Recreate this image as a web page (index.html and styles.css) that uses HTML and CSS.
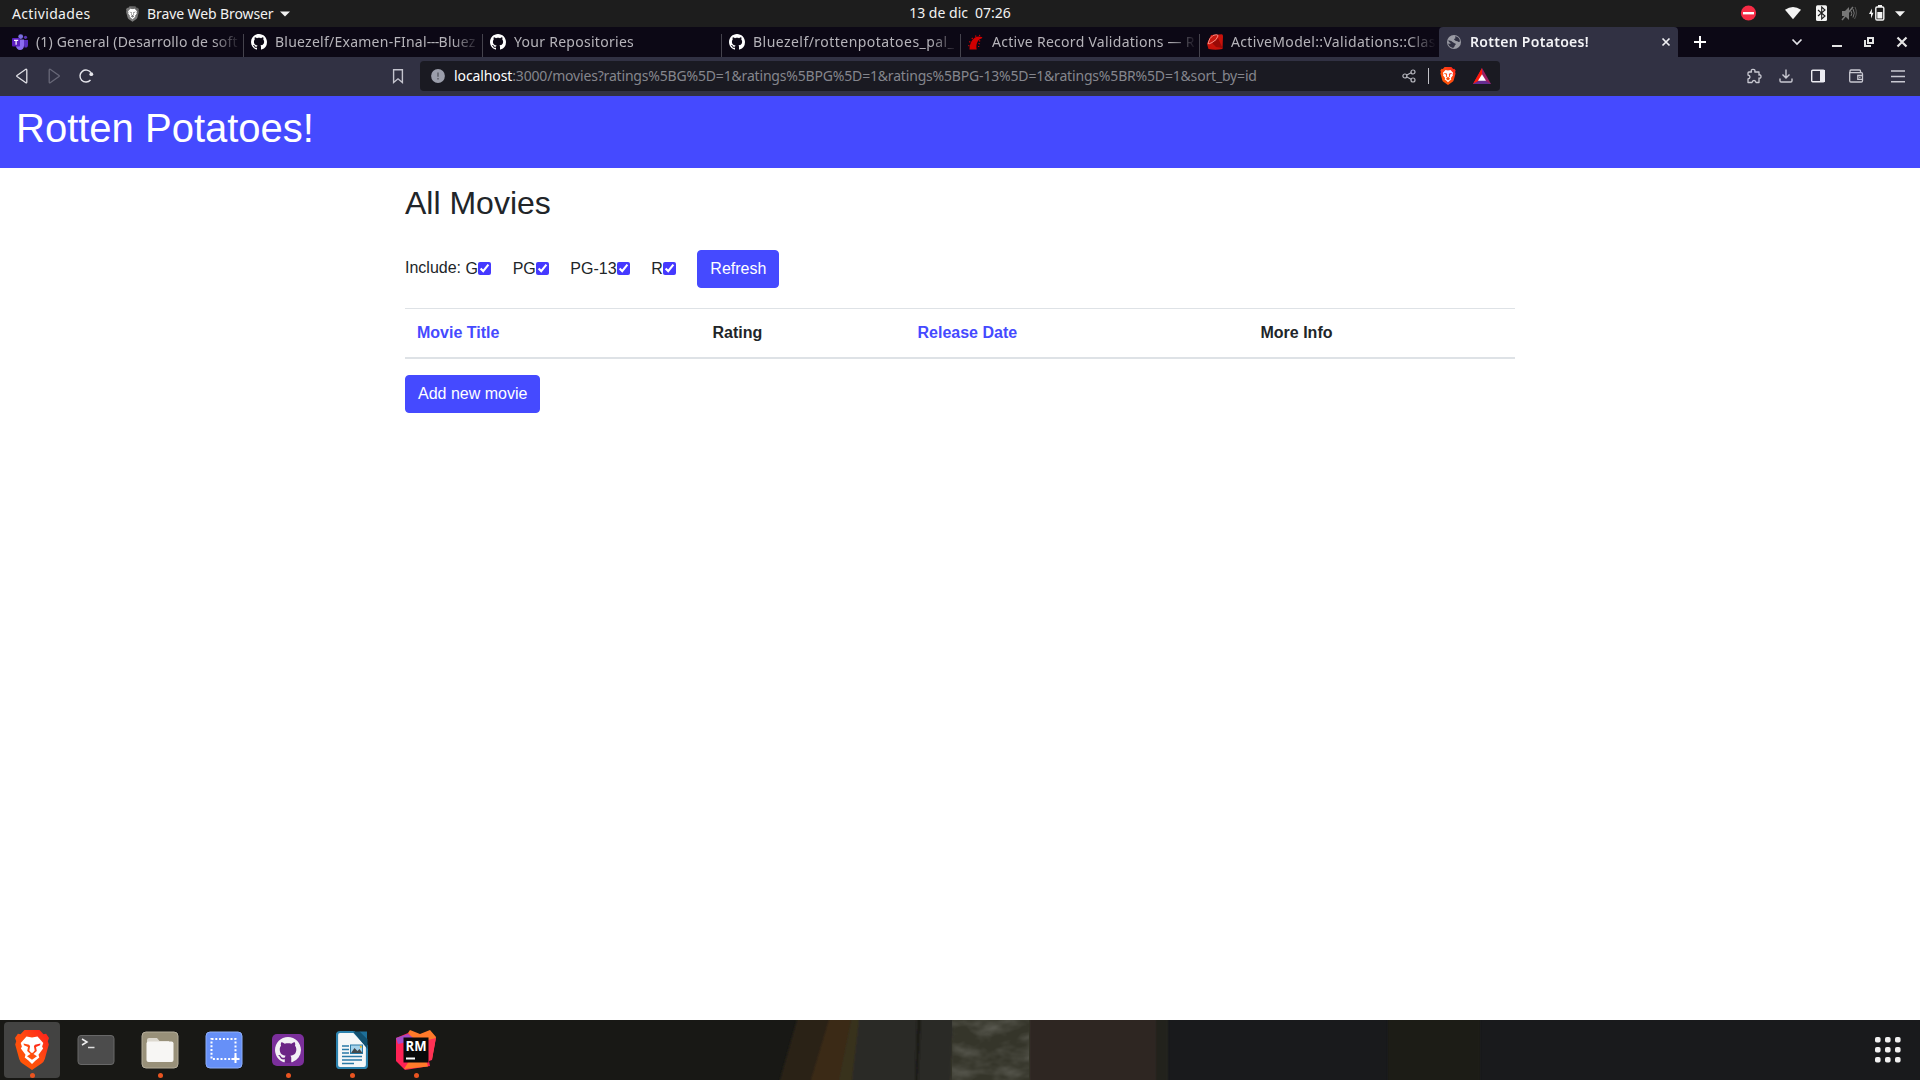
FILE: index.html
```html
<!DOCTYPE html>
<html lang="es">
<head>
<meta charset="utf-8">
<title>Rotten Potatoes!</title>
<link rel="stylesheet" href="styles.css">
</head>
<body>
<svg class="defs" width="0" height="0">
  <defs>
    <symbol id="github" viewBox="0 0 16 16"><path d="M8 0C3.58 0 0 3.58 0 8c0 3.54 2.29 6.53 5.47 7.59.4.07.55-.17.55-.38 0-.19-.01-.82-.01-1.49-2.01.37-2.53-.49-2.69-.94-.09-.23-.48-.94-.82-1.13-.28-.15-.68-.52-.01-.53.63-.01 1.08.58 1.23.82.72 1.21 1.87.87 2.33.66.07-.52.28-.87.51-1.07-1.78-.2-3.64-.89-3.64-3.95 0-.87.31-1.59.82-2.15-.08-.2-.36-1.02.08-2.12 0 0 .67-.21 2.2.82.64-.18 1.32-.27 2-.27s1.36.09 2 .27c1.53-1.04 2.2-.82 2.2-.82.44 1.1.16 1.92.08 2.12.51.56.82 1.27.82 2.15 0 3.07-1.87 3.75-3.65 3.95.29.25.54.73.54 1.48 0 1.07-.01 1.93-.01 2.2 0 .21.15.46.55.38A8.01 8.01 0 0016 8c0-4.42-3.58-8-8-8z"/></symbol>
    <symbol id="lion" viewBox="0 0 34 40">
      <path class="shield" d="M9.500 0h15l4 4.300 2.600-.6 2.900 4.300-1.200 3.300 1 3.200-4 14.500q-.8 2.800-3.300 4.500L17 40l-9.500-6.500Q5 31.800 4.200 29L.2 14.500l1-3.200L0 8l2.900-4.300 2.600.6z"/>
      <path class="face" d="M17 7.500l5.500-1 5.800 6.500-1.200 3.500 1 2-4.600 6.200.8 2.800-4 3.200L17 34l-3.300-3.300-4-3.200.8-2.800-4.600-6.200 1-2L5.700 13l5.800-6.500z"/>
      <path class="shield" d="M8.500 13.500l5.600 1.200 1 1.500-.8 4.300 1.800 2.200h1.800l1.800-2.200-.8-4.300 1-1.500 5.600-1.200-.5 1.700-4 1.800.8 4-3.300 3 3.500 2.200-5 3.600-5-3.600 3.500-2.200-3.300-3 .8-4-4-1.800z"/>
    </symbol>
    <linearGradient id="flame" x1="0" y1="1" x2="1" y2="0"><stop offset="0" stop-color="#ff5a00"/><stop offset=".55" stop-color="#ff4a12"/><stop offset="1" stop-color="#ff1c1c"/></linearGradient>
  </defs>
</svg>

<header class="panel">
  <div class="panel-left">
    <span class="activities">Actividades</span>
    <svg class="mono-lion" width="13" height="16"><use href="#lion"/></svg>
    <span class="app-name">Brave Web Browser</span>
    <svg class="caret" width="10" height="6"><path d="M0 .5h10L5 5.500z" fill="#f2f2f2"/></svg>
  </div>
  <div class="clock"><span>13 de dic</span><span>07:26</span></div>
  <div class="status">
    <svg class="dnd" width="20" height="20"><circle cx="9.500" cy="10" r="7.600" fill="#f62b45"/><rect x="4" y="9" width="11" height="2.400" fill="#fff"/></svg>
    <svg class="wifi" width="20" height="20"><path d="M2 6.800Q10 1.200 18 6.800L10 16.300z" fill="#f4f4f4"/></svg>
    <svg class="bluetooth" width="20" height="20"><rect x="4" y="2.200" width="11" height="15.800" rx="1.500" fill="#f4f4f4"/><path d="M6 7l7 6-3.300 3V4L13 7l-7 6" fill="none" stroke="#1d1d1d" stroke-width="1.100"/></svg>
    <svg class="volume" width="20" height="20" stroke="#777" fill="none"><path d="M3 8h3l4-4v13l-4-4H3z" fill="#777" stroke="none"/><path d="M3 17L14 4" stroke-width="1.500"/><path d="M12 8q1.500 2.500 0 5M14 6q2.500 4 0 8.500" /><path d="M16 4q3 6-.5 12" stroke="#555"/></svg>
    <svg class="battery" width="20" height="20"><path d="M5 5.500L2 11h2v4.500L6.500 9.800H4.800z" fill="#f4f4f4"/><rect x="8.800" y="4" width="8" height="13" rx="1.200" fill="none" stroke="#f4f4f4" stroke-width="1.400"/><rect x="11" y="2" width="4" height="2" fill="#f4f4f4"/><rect x="10.300" y="9" width="5" height="6.500" fill="#f4f4f4"/></svg>
    <svg class="more" width="20" height="20"><path d="M5 8.300h10l-5 5.200z" fill="#f2f2f2"/></svg>
  </div>
</header>

<div class="tabstrip">
  <div class="tab teams">
    <svg class="favicon" width="16" height="16"><circle cx="8.700" cy="2.600" r="2.400" fill="#7b6fe0"/><circle cx="13.500" cy="3.300" r="1.600" fill="#5b35b5"/><path d="M11 6h5v5q0 3-3.500 2.500z" fill="#5a2fc4"/><path d="M5 5.500h7V12q-.5 4-4 4-3.500-.3-4-4z" fill="#8a6cf0"/><rect y="4" width="8" height="8.500" rx="1" fill="#5b1fc0"/><path d="M2 6.300h4.200M4.100 6v4.700" stroke="#fff" stroke-width="1.200"/></svg>
    <span class="tab-title">(1) General (Desarrollo de soft</span>
  </div>
  <div class="tab examen">
    <svg class="favicon github" width="16" height="16"><use href="#github"/></svg>
    <span class="tab-title">Bluezelf/Examen-FInal<span class="dashes">---</span>Bluez</span>
  </div>
  <div class="tab repos">
    <svg class="favicon github" width="16" height="16"><use href="#github"/></svg>
    <span class="tab-title">Your Repositories</span>
  </div>
  <div class="tab potatoes">
    <svg class="favicon github" width="16" height="16"><use href="#github"/></svg>
    <span class="tab-title">Bluezelf/rottenpotatoes_pal_</span>
  </div>
  <div class="tab rails">
    <svg class="favicon" width="16" height="16"><path d="M1.500 15.500C1.500 9 5 2.500 11 2.500l3.500.7-1 1.300C10 5.500 7.500 9.500 8.700 15.500z" fill="#d30001"/><path d="M.2 11.500l1.300.4M1.200 7.500l1.200.8M3.800 3.800l.9 1.200M7.500 1.500l.5 1.200M11.500.8l.2 1M10.500 9.500l1.300.3M11 6.500l1.200.7M10 12.500h1.300" stroke="#d30001" stroke-width="1.200"/></svg>
    <span class="tab-title">Active Record Validations — R</span>
  </div>
  <div class="tab model">
    <svg class="favicon" width="16" height="16"><path d="M4 1l11-.8q1 .3 1 2L15.500 15q-7 1.500-14 0L0 10z" fill="#c8120b"/><path d="M5 9l6-5 4.500 10L9 13z" fill="#990a06"/><path d="M1 9.500Q2 4 6 1.500 11-.2 11 2 10 6 5 8.500 1.500 10.500 1 9.500z" fill="#c8180f" stroke="#ff9d94" stroke-width=".9"/></svg>
    <span class="tab-title">ActiveModel::Validations::Clas</span>
  </div>
  <div class="tab active">
    <svg class="favicon" width="16" height="16"><circle cx="8" cy="8" r="7" fill="#9a9ba4"/><path d="M9 2.300q4.500.5 5 5.200-1.500 1-2.500-.2Q9.500 7.500 8 5.500q.2-1 1.500-1.200zM2 6.500Q5.500 6 6.500 8q1.500.8 3.500 2l-1.200 1.500q-.2 1.500-1.800 2.500Q3 13 2 9.500q2 .5 3-.3-2-.5-3-2.700z" fill="#313143"/></svg>
    <span class="tab-title">Rotten Potatoes!</span>
    <svg class="close" width="10" height="10"><path d="M1.500 1.500l7 7M8.500 1.500l-7 7" stroke="#f0f0f4" stroke-width="1.700"/></svg>
  </div>
  <svg class="new-tab" width="12" height="12"><path d="M6 0v12M0 6h12" stroke="#fff" stroke-width="2"/></svg>
  <div class="window-controls">
    <svg class="chevron" width="20" height="20"><path d="M5.500 7.500L10 12l4.500-4.500" fill="none" stroke="#e2e2e6" stroke-width="1.700"/></svg>
    <svg class="minimize" width="20" height="20"><rect x="5" y="13" width="10" height="2" fill="#e4e4e4"/></svg>
    <svg class="restore" width="20" height="20"><path d="M9 6h5v5H9zM6 8v6h6" fill="none" stroke="#e4e4e4" stroke-width="2"/></svg>
    <svg class="quit" width="20" height="20"><path d="M5.500 5.500l9 9M14.500 5.500l-9 9" stroke="#e4e4e4" stroke-width="2.200"/></svg>
  </div>
</div>

<div class="toolbar">
  <svg class="back" width="20" height="20"><path d="M14.800 3.800v12.400q-.2 1-1 .5L5 10.500q-.6-.5 0-1l8.800-6.200q.8-.4 1 .5z" fill="none" stroke="#e0e0e6" stroke-width="1.300"/></svg>
  <svg class="forward" width="20" height="20"><path d="M5.200 3.800v12.400q.2 1 1 .5L15 10.500q.6-.5 0-1L6.200 3.300q-.8-.4-1 .5z" fill="none" stroke="#686878" stroke-width="1.300"/></svg>
  <svg class="reload" width="20" height="20"><path d="M14.500 14A6 6 0 1 1 15 6.700" fill="none" stroke="#e6e6ec" stroke-width="1.400"/><circle cx="15.300" cy="8.200" r="1.900" fill="#e6e6ec"/></svg>
  <svg class="bookmark" width="20" height="20"><path d="M5.600 3.700h8.800v12.800L10 12.800l-4.400 3.700z" fill="none" stroke="#c4c4ce" stroke-width="1.400"/></svg>
  <div class="address">
    <svg class="info" width="14" height="14"><circle cx="7" cy="7" r="6.900" fill="#9b9eab"/><path d="M7 3.500v4.300M7 8.900v1.600" stroke="#63656f" stroke-width="1.700"/></svg>
    <div class="url"><span class="host">localhost</span><span class="path">:3000/movies?ratings%5BG%5D=1&amp;ratings%5BPG%5D=1&amp;ratings%5BPG-13%5D=1&amp;ratings%5BR%5D=1&amp;sort_by=id</span></div>
    <svg class="share" width="14" height="14"><path d="M3 7l7.500-4M3 7l7.500 4" stroke="#b5b6bd" stroke-width="1.100"/><g fill="#1a1a22" stroke="#b5b6bd" stroke-width="1.200"><circle cx="2.900" cy="7" r="2"/><circle cx="11" cy="3" r="2"/><circle cx="11" cy="11" r="2"/></g></svg>
    <span class="divider"></span>
    <svg class="shields" width="16" height="18"><use href="#lion"/></svg>
    <svg class="rewards" width="18" height="16"><path d="M9 0l9 16H0z" fill="#9e1f63"/><path d="M9 0L0 16l9-5z" fill="#ff1a0a"/><path d="M0 16h18l-9-5z" fill="#662d91"/><path d="M9 6.200l4 6.600H5z" fill="#fff"/></svg>
  </div>
  <div class="tools">
    <svg width="20" height="20"><path d="M5 6h2.500Q6.500 3.300 9 3.300T10.800 6H15v3.200q2-.8 2 1.300t-2 1.500v4.500h-3q-.3-2-2-2t-2 2H4v-3.500q2-.4 2-2t-2-2V7q0-1 1-1z" fill="none" stroke="#c9c9d2" stroke-width="1.300" stroke-linejoin="round"/></svg>
    <svg width="20" height="20"><path d="M10 3.500v8.300M6.500 8.500L10 12l3.500-3.500M4 12.500v2.300q0 1.200 1.200 1.200h9.600q1.200 0 1.200-1.200v-2.300" fill="none" stroke="#c9c9d2" stroke-width="1.400"/></svg>
    <svg class="sidebar-icon" width="20" height="20"><rect x="3.700" y="4.200" width="12.600" height="11.600" rx="1" fill="none" stroke="#ececf2" stroke-width="1.400"/><rect x="12" y="4" width="5" height="12" fill="#ececf2"/></svg>
    <svg class="wallet" width="20" height="20"><path d="M4 6.500V5q0-1 1-1h8.500q1 0 1 1v1.500M3.700 6.700h11.600q1.200 0 1.200 1.200v6.900q0 1.200-1.200 1.200H4.900q-1.200 0-1.200-1.200zM16.500 9.500h-4.700v3.800h4.700" fill="none" stroke="#c9c9d2" stroke-width="1.300"/><rect x="13.200" y="10.800" width="1.300" height="1.300" fill="#c9c9d2"/></svg>
    <svg class="menu" width="20" height="20"><path d="M3 5h14M3 10.500h14M3 15.700h14" stroke="#c9c9d2" stroke-width="1.400"/></svg>
  </div>
</div>

<nav class="navbar"><h1>Rotten Potatoes!</h1></nav>
<main class="container">
  <h2>All Movies</h2>
  <form class="filters">
    <span class="include">Include:</span>
    <label>G<input type="checkbox" checked></label>
    <label>PG<input type="checkbox" checked></label>
    <label>PG-13<input type="checkbox" checked></label>
    <label>R<input type="checkbox" checked></label>
    <button type="button" class="btn">Refresh</button>
  </form>
  <table>
    <thead><tr><th class="col-title"><a>Movie Title</a></th><th class="col-rating">Rating</th><th class="col-date"><a>Release Date</a></th><th>More Info</th></tr></thead>
  </table>
  <a class="btn">Add new movie</a>
</main>

<footer class="dock">
  <svg class="wallpaper" width="1920" height="60">
    <defs>
      <filter id="grain" x="0" y="0" width="1" height="1"><feTurbulence type="fractalNoise" baseFrequency=".04 .07" numOctaves="3" seed="4"/><feColorMatrix values="0 0 0 0 .1  0 0 0 0 .1  0 0 0 0 .08  1.800 0 0 0 -.7"/></filter>
      <filter id="soft" x="-2%" y="-10%" width="104%" height="120%"><feGaussianBlur stdDeviation="1.200 0"/></filter>
    </defs>
    <rect width="800" height="60" fill="#181815"/>
    <g filter="url(#soft)">
      <path d="M797 0h35l-18 60h-34z" fill="#2a2419"/>
      <path d="M829 0h22l-11 60h-29z" fill="#3b2a16"/>
      <path d="M851 0h9l-5 60h-16z" fill="#38301f"/>
      <path d="M859 0h94l-3 60h-98z" fill="#2b2a26"/>
      <path d="M917 0h4l-3 60h-3z" fill="#1b1b19"/>
      <path d="M953 0h77v60h-80z" fill="#36342a"/>
      <path d="M1030 0h126v60h-126z" fill="#2d2823"/>
      <rect x="1156" width="12" height="60" fill="#21221f"/>
      <rect x="1388" width="92" height="60" fill="#1f1e19"/>
    </g>
    <rect x="952" width="77" height="60" filter="url(#grain)"/>
  </svg>
  <div class="launchers">
    <div class="launcher running focused"><svg class="brave" width="34" height="40"><use href="#lion"/></svg></div>
    <div class="launcher"><svg width="38" height="40"><rect x="1" y="5.500" width="36" height="29" rx="3" fill="#4c4c4c" stroke="#686868"/><path d="M5 9l5 3-5 3" fill="none" stroke="#eee" stroke-width="1.500"/><path d="M11 17.500h6.500" stroke="#ddd" stroke-width="1.500"/></svg></div>
    <div class="launcher running"><svg width="38" height="40"><rect x="1" y="2" width="36" height="36" rx="4" fill="#989079" stroke="#b4ad9b"/><path d="M6 18V10q0-2 2-2h8l2.500 3H28v8z" fill="#dcd8cf"/><rect x="5.500" y="11.500" width="27" height="20.500" rx="2" fill="#f7f6f4"/></svg></div>
    <div class="launcher"><svg width="38" height="40"><rect x="1" y="2" width="36" height="36" rx="4" fill="#6690f8" stroke="#8daef9"/><rect x="6.500" y="9" width="24" height="20" fill="none" stroke="#fff" stroke-width="2" stroke-dasharray="2 1.800"/><path d="M30.500 25v8M26.500 29h8" stroke="#fff" stroke-width="2"/></svg></div>
    <div class="launcher running"><svg width="32" height="32"><rect width="32" height="32" rx="5" fill="#7b2f9b"/><circle cx="16" cy="16" r="13" fill="#6b2585"/><svg class="cat" x="3" y="3" width="26" height="26"><use href="#github"/></svg></svg></div>
    <div class="launcher running"><svg width="32" height="40"><path d="M4 2h14l13 14v19q0 3-3 3H4q-3 0-3-3V5q0-3 3-3z" fill="#f5f7f8" stroke="#2c82ae" stroke-width="2.200"/><path d="M17 1.500h7L31.500 9v10z" fill="#12506f"/><path d="M23.500 1.500h7.500V9z" fill="#1d6f99"/><g stroke="#2a7aa6" stroke-width="1.600"><path d="M6 16h7M6 19.500h7M6 23h7M6 26.500h20M6 30h20M6 33.500h12"/></g><rect x="14.500" y="15" width="12" height="8.500" fill="#a6d3ec" stroke="#2a7aa6"/><path d="M15 23l3.500-5 3 3 2-2 3 4z" fill="#42494c"/><circle cx="24.800" cy="16.800" r="1" fill="#f5b400"/></svg></div>
    <div class="launcher running"><svg width="40" height="40"><path d="M0 8l12-5 16 3 6 30-25 4-9-9z" fill="#ff2255"/><path d="M12 3l2-3 10 4 10-4 6 7-4 22-8-8z" fill="#ff7a2a"/><path d="M32 10l8-2-4 22-6 2z" fill="#ff3155"/><path d="M0 8l12-4 8 6L2 14z" fill="#a24bc4"/><path d="M8 39l5-8 17-1 2 6.500z" fill="#ff7a2a"/><rect x="7.500" y="7.500" width="25" height="25" fill="#0a0a0a"/><rect x="10" y="27.500" width="9" height="2" fill="#fff"/><text x="9.500" y="20.500" textLength="21" lengthAdjust="spacingAndGlyphs">RM</text></svg></div>
  </div>
  <svg class="apps" width="26" height="26" fill="#f0f0f0"><g id="dots"><rect y="0" width="5.600" height="5.600" rx="1.800"/><rect x="10" width="5.600" height="5.600" rx="1.800"/><rect x="20" width="5.600" height="5.600" rx="1.800"/></g><use href="#dots" y="10"/><use href="#dots" y="20"/></svg>
</footer>
</body>
</html>
```
FILE: styles.css
```css
* { box-sizing: border-box; }
html, body { margin: 0; height: 100%; overflow: hidden; }
body {
  display: flex;
  flex-direction: column;
  background: #fff;
  color: #212529;
  font: 16px/24px "Liberation Sans", Arial, sans-serif;
}
svg { display: block; flex: none; }
.defs { position: absolute; }
.shield { fill: url(#flame); }
.face { fill: #fff; }

/* system panel */
.panel, .tabstrip, .toolbar { font: 14px/20px "Noto Sans", sans-serif; white-space: nowrap; flex: none; }
.panel {
  height: 27px;
  display: grid;
  grid-template-columns: 1fr auto 1fr;
  align-items: center;
  background: #1d1d1d;
  color: #f2f2f2;
}
.panel-left { display: flex; align-items: center; padding-left: 12px; }
.activities { width: 114px; letter-spacing: .35px; }
.mono-lion { filter: grayscale(1) brightness(1.1); margin-right: 8px; }
.app-name { width: 133px; letter-spacing: -.1px; }
.clock { display: flex; gap: 7px; margin-top: -1px; }
.status { display: flex; justify-content: flex-end; padding-right: 10px; margin-top: -1px; }
.wifi { margin-left: 24px; }
.bluetooth { margin-left: 9px; }
.volume { margin-left: 7px; }
.battery { margin-left: 8px; }
.more { margin-left: 3px; }

/* tabs */
.tabstrip { height: 30px; display: flex; align-items: center; background: #0c0815; padding-left: 4px; }
.tab {
  width: 239px;
  height: 30px;
  display: flex;
  align-items: center;
  gap: 8px;
  padding: 0 3px 0 7px;
  color: #b6b4ba;
  background: linear-gradient(#45434d, #45434d) right bottom / 1px 23px no-repeat;
}
.tab-title {
  flex: 1;
  min-width: 0;
  overflow: hidden;
  letter-spacing: .28px;
  -webkit-mask-image: linear-gradient(90deg, #000 calc(100% - 28px), transparent);
  mask-image: linear-gradient(90deg, #000 calc(100% - 28px), transparent);
}
.github { fill: #fff; }
.teams { width: 240px; padding-left: 8px; }
.teams .tab-title { letter-spacing: .17px; }
.examen .tab-title { letter-spacing: .25px; }
.dashes { letter-spacing: -.6px; }
.potatoes .tab-title { letter-spacing: .46px; }
.model { background: none; }
.model .tab-title { letter-spacing: .33px; }
.tab.active { width: 239px; padding: 0 7px; background: #313143; color: #f3f3f6; border-radius: 4px 4px 0 0; }
.active .tab-title { font-weight: 600; letter-spacing: .3px; }
.new-tab { margin-left: 16px; }
.window-controls { margin-left: auto; display: flex; padding-right: 8px; }
.minimize { margin-left: 20px; }
.restore { margin-left: 12px; }
.quit { margin-left: 13px; }

/* address bar */
.toolbar { height: 39px; display: flex; align-items: center; background: #313143; padding: 0 12px 1px; }
.forward { margin-left: 12px; }
.reload { margin-left: 12px; }
.bookmark { margin-left: 292px; margin-right: 12px; }
.address {
  width: 1080px;
  height: 30px;
  display: flex;
  align-items: center;
  padding: 0 9px 0 11px;
  background: #1a1a22;
  border-radius: 4px;
}
.url { flex: 1; margin-left: 9px; color: #85868d; }
.host { color: #fff; letter-spacing: -.1px; }
.path { letter-spacing: -.18px; }
.divider { width: 1px; height: 16px; margin: 0 11px 0 12px; background: #c2c2c8; }
.rewards { margin-left: 17px; }
.tools { margin-left: auto; display: flex; gap: 12px; }
.wallet { margin-left: 6px; }
.menu { margin-left: 10px; }

/* page */
.navbar { height: 72px; flex: none; padding: 8px 16px; background: #454aff; color: #fff; }
h1, h2 { margin: 0; font-weight: 400; line-height: 1.2; }
h1 { font-size: 40px; }
h2 { font-size: 32px; margin-bottom: 27.6px; }
.container { flex: 1; width: 1140px; margin: 0 auto; padding: 16px 15px 0; }
.filters { display: flex; align-items: center; height: 38px; margin-bottom: 20px; }
.include { width: 60.6px; margin-top: -1px; }
label { display: flex; align-items: center; margin-right: 21.6px; }
input { width: 13px; height: 13px; margin: 0; accent-color: #4539ff; }
.btn {
  display: inline-block;
  padding: 6px 12px;
  border: 1px solid #454aff;
  border-radius: 4px;
  background: #454aff;
  color: #fff;
  font: inherit;
}
table { width: 100%; margin-bottom: 16px; border-collapse: separate; border-spacing: 0; table-layout: fixed; }
th { padding: 12px; text-align: left; border-top: 1px solid #dee2e6; border-bottom: 2px solid #dee2e6; }
th a { color: #454aff; }
.col-title { width: 295.500px; }
.col-rating { width: 205px; }
.col-date { width: 343px; }

/* dock */
.dock { position: relative; height: 60px; flex: none; display: flex; align-items: center; background: #191a1c; padding: 0 19px 0 4px; }
.wallpaper { position: absolute; left: 0; top: 0; }
.launchers { position: relative; display: flex; gap: 8px; }
.launcher { position: relative; width: 56px; height: 56px; display: flex; align-items: center; justify-content: center; border-radius: 4px; }
.focused { background: #434342; }
.running::after { content: ""; position: absolute; bottom: 0; left: 25.500px; width: 5px; height: 5px; border-radius: 50%; background: #e95420; }
.cat { fill: #f3f1f5; }
.launcher text { font: 700 14px "Open Sans", sans-serif; fill: #fff; }
.apps { position: relative; margin-left: auto; }
```
